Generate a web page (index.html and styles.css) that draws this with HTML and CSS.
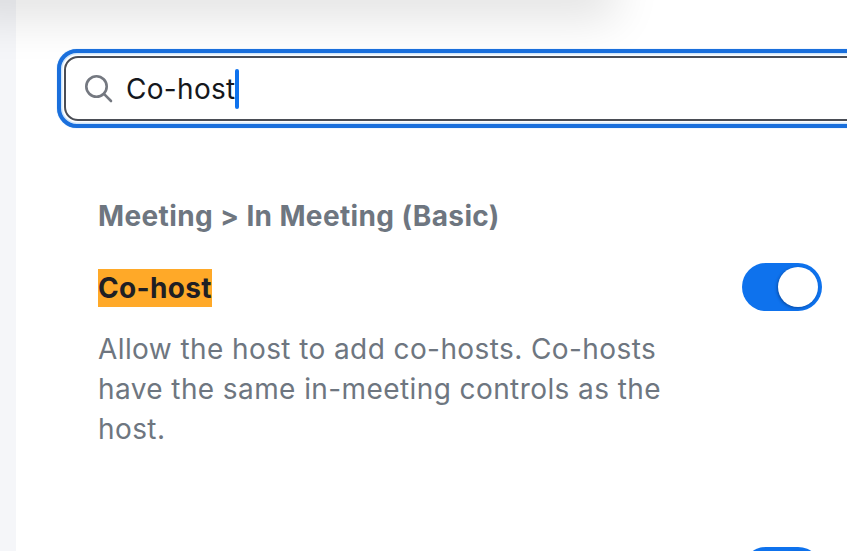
FILE: index.html
```html
<!DOCTYPE html>
<html lang="en">
<head>
<meta charset="utf-8">
<title>Settings search</title>
<link rel="stylesheet" href="styles.css">
</head>
<body>
<div class="page">
  <div class="rail"></div>
  <main class="main">
    <div class="top-shade"></div>
    <div class="search-ring">
      <div class="search">
        <svg class="search-icon" width="30" height="30" viewBox="0 0 30 30" fill="none" stroke="#747880" stroke-width="2.6" stroke-linecap="round"><circle cx="12.5" cy="12.5" r="10.2"/><path d="M20.2 20.2 L27 27"/></svg>
        <span class="query">Co-host</span><span class="caret"></span>
      </div>
    </div>
    <section class="results">
      <h2 class="crumb">Meeting &gt; In Meeting (Basic)</h2>
      <div class="setting">
        <div class="setting-text">
          <h3 class="setting-title"><mark class="hit">Co-host</mark></h3>
          <p class="setting-desc">Allow the host to add co-hosts. Co-hosts have the same in-meeting controls as the host.</p>
        </div>
        <div class="toggle"><span class="knob"></span></div>
      </div>
      <div class="setting next">
        <div class="setting-text"></div>
        <div class="toggle"><span class="knob"></span></div>
      </div>
    </section>
  </main>
</div>
</body>
</html>
```
FILE: styles.css
```css
html, body {
  margin: 0;
  height: 100%;
  overflow: hidden;
  background: #fff;
}
.page {
  display: flex;
  width: 847px;
  height: 551px;
  overflow: hidden;
  font-family: Inter, "Liberation Sans", sans-serif;
}
.rail {
  flex: 0 0 16px;
  background: #f5f6f9;
}
.main {
  flex: 1;
  min-width: 0;
  position: relative;
  padding: 49px 0 0 41px;
}
.top-shade {
  position: absolute;
  left: -40px;
  top: -20px;
  width: 620px;
  height: 20px;
  box-shadow: 0 0 46px 20px rgba(0, 0, 0, 0.11);
}
.search-ring {
  position: relative;
  width: 900px;
  height: 79px;
  box-sizing: border-box;
  padding: 3px;
  border: 4px solid #1a6fdc;
  border-radius: 20px;
  background: #fff;
  box-shadow: inset 0 0 0 1.5px #cfe6fb, 0 0 1px #6fb0f0;
}
.search {
  display: flex;
  align-items: center;
  height: 100%;
  box-sizing: border-box;
  padding-left: 18px;
  border: 2px solid #4a4d55;
  border-radius: 14px;
  background: #fff;
}
.search-icon {
  flex: none;
  margin-right: 12px;
}
.query {
  font-size: 28px;
  letter-spacing: 0.3px;
  color: #15171c;
}
.caret {
  width: 4px;
  height: 40px;
  margin-left: -1px;
  border-radius: 2px;
  background: #0e72ed;
}
.results {
  padding: 0 25px 0 41px;
}
.crumb {
  margin: 70px 0 0;
  font-size: 28px;
  line-height: 36px;
  font-weight: 700;
  letter-spacing: 0.37px;
  color: #6e7680;
}
.setting {
  display: flex;
  justify-content: space-between;
  align-items: flex-start;
}
.setting-text {
  width: 580px;
}
.setting-title {
  margin: 35px 0 0;
  font-size: 28px;
  line-height: 38px;
  font-weight: 700;
  letter-spacing: 0.33px;
  color: #232333;
}
.hit {
  display: inline-block;
  background: #ffa928;
  color: #1f1f24;
}
.setting-desc {
  margin: 22px 0 0;
  font-size: 28px;
  line-height: 40px;
  color: #6e7680;
  letter-spacing: 0.41px;
}
.toggle {
  flex: none;
  display: flex;
  justify-content: flex-end;
  align-items: center;
  width: 80px;
  height: 48px;
  margin-top: 29px;
  box-sizing: border-box;
  padding-right: 4px;
  border-radius: 24px;
  background: #0e72ed;
}
.knob {
  width: 40px;
  height: 40px;
  border-radius: 50%;
  background: #fff;
  box-shadow: -1px 1px 3px rgba(0, 30, 80, 0.45);
}
.next .toggle {
  margin-top: 98px;
}
```
